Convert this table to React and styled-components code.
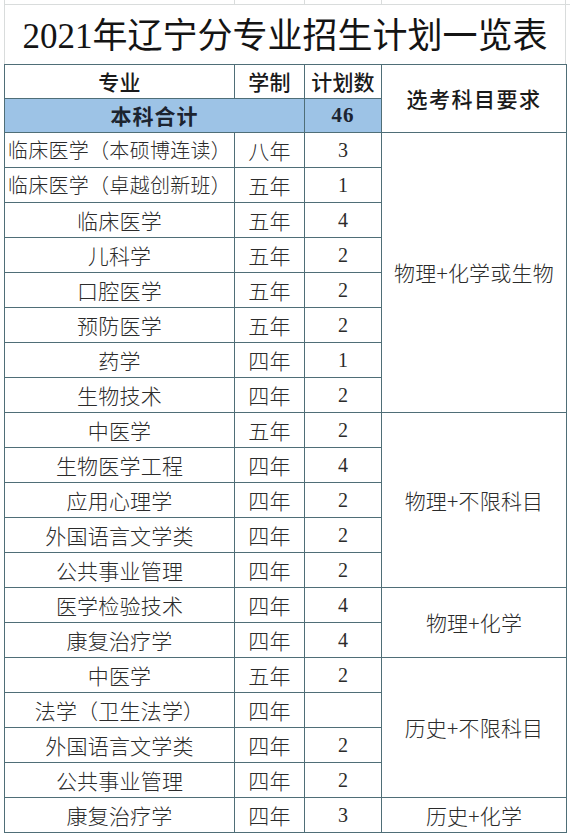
import React from 'react';
import styled, { createGlobalStyle } from 'styled-components';

const GlobalStyle = createGlobalStyle`
  html, body {
    margin: 0;
    padding: 0;
    background: #ffffff;
  }
  body {
    font-family: "Noto Sans CJK SC", sans-serif;
    color: #262626;
  }
`;

const LINE = '#4f6e77';
const FAINT = '#d9dcdc';
const CJK = '"Noto Sans CJK SC", sans-serif';
const SERIF = '"Liberation Serif", "Noto Sans CJK SC", serif';

const Sheet = styled.div`
  width: 570px;
  height: 835px;
  overflow: hidden;
  padding-left: 4px;
  box-sizing: border-box;
`;

const GridStrip = styled.div`
  display: grid;
  grid-template-columns: 230px 70px 77px 185px;
  height: 4px;
  border-bottom: 1px solid ${FAINT};

  span {
    border-left: 1px solid ${FAINT};
  }
  span:last-child {
    border-right: 1px solid ${FAINT};
  }
`;

const Title = styled.div`
  width: 562px;
  height: 59px;
  box-sizing: border-box;
  border-left: 1px solid ${FAINT};
  border-right: 1px solid ${FAINT};
  font-family: ${SERIF};
  font-size: 35px;
  line-height: 63px;
  text-align: center;
  color: #141414;
  white-space: nowrap;
`;

const Table = styled.table`
  width: 562px;
  border-collapse: collapse;
  table-layout: fixed;
  border: 1px solid ${LINE};
`;

const Cell = styled.td`
  border: 1px solid ${LINE};
  padding: 0;
  height: ${p => (p.$head ? 33 : 34)}px;
  text-align: center;
  vertical-align: middle;
  white-space: nowrap;
  font-family: ${p => (p.$num ? SERIF : CJK)};
  font-size: ${p => (p.$head ? 21 : p.$num || p.$long ? 20 : 21)}px;
  font-weight: ${p => (p.$head ? 500 : 300)};
  letter-spacing: ${p => (p.$wide ? '1.5px' : p.$long ? '0.3px' : '0.2px')};
  color: ${p => (p.$head ? '#1a1a1a' : '#2b2b2b')};
  background: ${p => (p.$total ? '#9dc3e6' : '#ffffff')};
  line-height: 1;
`;

const TotalText = styled.span`
  font-weight: 700;
  font-size: 21px;
  letter-spacing: 1px;
  color: #1c2430;
`;

const rows = [
  ['临床医学（本硕博连读）', '八年', '3'],
  ['临床医学（卓越创新班）', '五年', '1'],
  ['临床医学', '五年', '4'],
  ['儿科学', '五年', '2'],
  ['口腔医学', '五年', '2'],
  ['预防医学', '五年', '2'],
  ['药学', '四年', '1'],
  ['生物技术', '四年', '2'],
  ['中医学', '五年', '2'],
  ['生物医学工程', '四年', '4'],
  ['应用心理学', '四年', '2'],
  ['外国语言文学类', '四年', '2'],
  ['公共事业管理', '四年', '2'],
  ['医学检验技术', '四年', '4'],
  ['康复治疗学', '四年', '4'],
  ['中医学', '五年', '2'],
  ['法学（卫生法学）', '四年', ''],
  ['外国语言文学类', '四年', '2'],
  ['公共事业管理', '四年', '2'],
  ['康复治疗学', '四年', '3'],
];

// subject requirement groups: first row index -> [span, text]
const groups = {
  0: [8, '物理+化学或生物'],
  8: [5, '物理+不限科目'],
  13: [2, '物理+化学'],
  15: [4, '历史+不限科目'],
  19: [1, '历史+化学'],
};

export default function App() {
  return (
    <>
      <GlobalStyle />
      <Sheet>
        <GridStrip>
          <span />
          <span />
          <span />
          <span />
        </GridStrip>
        <Title>2021年辽宁分专业招生计划一览表</Title>
        <Table>
          <colgroup>
            <col style={{ width: 230 }} />
            <col style={{ width: 70 }} />
            <col style={{ width: 77 }} />
            <col style={{ width: 185 }} />
          </colgroup>
          <tbody>
            <tr>
              <Cell $head>专业</Cell>
              <Cell $head>学制</Cell>
              <Cell $head>计划数</Cell>
              <Cell $head $wide rowSpan={2}>选考科目要求</Cell>
            </tr>
            <tr>
              <Cell $head $total colSpan={2}>
                <TotalText>本科合计</TotalText>
              </Cell>
              <Cell $head $total $num>
                <TotalText>46</TotalText>
              </Cell>
            </tr>
            {rows.map(([major, years, count], i) => (
              <tr key={i}>
                <Cell $long={major.length > 9}>{major}</Cell>
                <Cell>{years}</Cell>
                <Cell $num>{count}</Cell>
                {groups[i] && <Cell rowSpan={groups[i][0]}>{groups[i][1]}</Cell>}
              </tr>
            ))}
          </tbody>
        </Table>
      </Sheet>
    </>
  );
}
